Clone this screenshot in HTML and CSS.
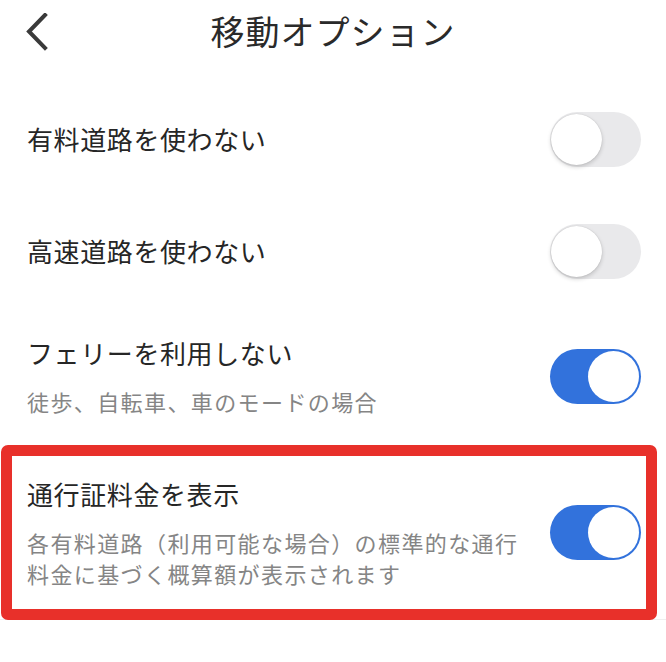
FILE: index.html
```html
<!DOCTYPE html>
<html lang="ja">
<head>
<meta charset="utf-8">
<title>移動オプション</title>
<link rel="stylesheet" href="styles.css">
</head>
<body>
<div class="page">
  <header class="header">
    <div class="back">
      <svg width="24" height="40" viewBox="0 0 24 40" aria-hidden="true">
        <polyline points="20,2 4,18.5 20,35" fill="none" stroke="#3a3a3a" stroke-width="4" stroke-linecap="square" stroke-linejoin="miter"/>
      </svg>
    </div>
    <h1 class="title">移動オプション</h1>
    <div></div>
  </header>

  <div class="row row-single">
    <div class="texts"><div class="label">有料道路を使わない</div></div>
    <div class="toggle off"><span class="knob"></span></div>
  </div>

  <div class="row row-single">
    <div class="texts"><div class="label">高速道路を使わない</div></div>
    <div class="toggle off"><span class="knob"></span></div>
  </div>

  <div class="row row-double">
    <div class="texts">
      <div class="label">フェリーを利用しない</div>
      <div class="desc">徒歩、自転車、車のモードの場合</div>
    </div>
    <div class="toggle on"><span class="knob"></span></div>
  </div>

  <div class="highlight-wrap">
    <div class="row row-highlight">
      <div class="texts">
        <div class="label">通行証料金を表示</div>
        <div class="desc-group">
          <div class="desc">各有料道路（利用可能な場合）の標準的な通行</div>
          <div class="desc">料金に基づく概算額が表示されます</div>
        </div>
      </div>
      <div class="toggle on"><span class="knob"></span></div>
    </div>
  </div>
</div>
</body>
</html>
```

FILE: styles.css
```css
html, body {
  margin: 0;
  padding: 0;
  background: #ffffff;
}

body {
  font-family: "Noto Sans CJK JP", "Noto Sans", sans-serif;
  color: #262626;
}

.page {
  width: 666px;
  height: 662px;
  overflow: hidden;
}

.header {
  display: grid;
  grid-template-columns: 1fr auto 1fr;
  align-items: center;
  height: 62px;
  margin-bottom: 21px;
}

.back {
  padding-left: 25px;
  padding-top: 4px;
  display: flex;
  align-items: center;
}

.back svg {
  display: block;
}

.title {
  margin: 0;
  font-size: 34px;
  font-weight: 400;
  letter-spacing: 1px;
  line-height: 62px;
  color: #2a2a2a;
}

.row {
  display: flex;
  align-items: center;
  justify-content: space-between;
  padding: 0 25px 0 27px;
  box-sizing: border-box;
}

.row-single {
  height: 112px;
}

.row-double {
  height: 138px;
}

.texts {
  display: flex;
  flex-direction: column;
  gap: 15px;
}

.label {
  font-size: 26px;
  letter-spacing: 0.6px;
  line-height: 36px;
  color: #262626;
}

.desc {
  font-size: 22px;
  letter-spacing: 1.4px;
  line-height: 31px;
  color: #858585;
}

.desc-group {
  display: flex;
  flex-direction: column;
}

.toggle {
  position: relative;
  width: 91px;
  height: 55px;
  border-radius: 28px;
  flex-shrink: 0;
  box-sizing: border-box;
}

.toggle.off {
  background: #e9e9eb;
}

.toggle.on {
  background: #3272dc;
}

.knob {
  position: absolute;
  top: 2px;
  width: 51px;
  height: 51px;
  border-radius: 50%;
  background: #ffffff;
}

.toggle.off .knob {
  left: 1px;
  box-shadow: 0 2px 4px rgba(0, 0, 0, 0.18), 0 0 1px rgba(0, 0, 0, 0.2);
}

.toggle.on .knob {
  right: 2px;
}

.highlight-wrap {
  border-bottom: 1px solid #efefef;
  padding-right: 9px;
  box-sizing: border-box;
  height: 175px;
}

.row-highlight {
  height: 175px;
  margin-left: 1px;
  border: 11px solid #e8302a;
  border-radius: 7px;
  padding: 0 5px 0 15px;
}
```
